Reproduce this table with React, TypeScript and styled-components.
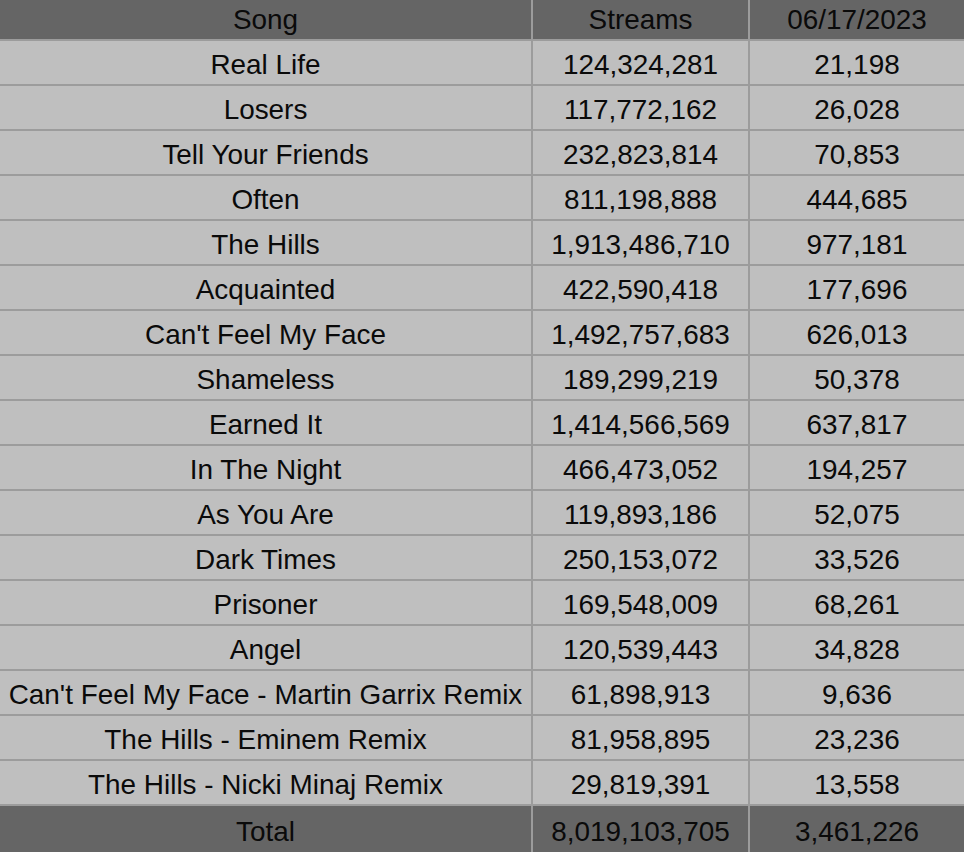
import React from "react";
import styled, { createGlobalStyle } from "styled-components";

const rows: [string, string, string][] = [
  ["Real Life", "124,324,281", "21,198"],
  ["Losers", "117,772,162", "26,028"],
  ["Tell Your Friends", "232,823,814", "70,853"],
  ["Often", "811,198,888", "444,685"],
  ["The Hills", "1,913,486,710", "977,181"],
  ["Acquainted", "422,590,418", "177,696"],
  ["Can't Feel My Face", "1,492,757,683", "626,013"],
  ["Shameless", "189,299,219", "50,378"],
  ["Earned It", "1,414,566,569", "637,817"],
  ["In The Night", "466,473,052", "194,257"],
  ["As You Are", "119,893,186", "52,075"],
  ["Dark Times", "250,153,072", "33,526"],
  ["Prisoner", "169,548,009", "68,261"],
  ["Angel", "120,539,443", "34,828"],
  ["Can't Feel My Face - Martin Garrix Remix", "61,898,913", "9,636"],
  ["The Hills - Eminem Remix", "81,958,895", "23,236"],
  ["The Hills - Nicki Minaj Remix", "29,819,391", "13,558"],
];

export default function App() {
  return (
    <>
      <GlobalStyle />
      <ScTable>
        <ScCell $dark $height={39} $shift={0}>Song</ScCell>
        <ScCell $dark $height={39} $shift={0}>Streams</ScCell>
        <ScCell $dark $height={39} $shift={0}>06/17/2023</ScCell>

        {rows.map(([song, streams, day]) => (
          <React.Fragment key={song}>
            <ScCell $height={43} $shift={4}>{song}</ScCell>
            <ScCell $height={43} $shift={4}>{streams}</ScCell>
            <ScCell $height={43} $shift={4}>{day}</ScCell>
          </React.Fragment>
        ))}

        <ScCell $dark $height={46} $shift={6}>Total</ScCell>
        <ScCell $dark $height={46} $shift={6}>8,019,103,705</ScCell>
        <ScCell $dark $height={46} $shift={6}>3,461,226</ScCell>
      </ScTable>
    </>
  );
}

const GlobalStyle = createGlobalStyle`
  body {
    margin: 0;
    background: #bfbfbf;
    overflow: hidden;
  }
`;

const ScTable = styled.div`
  display: grid;
  grid-template-columns: 531px 215px 214px;
  column-gap: 2px;
  row-gap: 2px;
  width: 964px;
  height: 852px;
  background-color: #9c9c9c;
  align-content: start;
  font-family: "Liberation Sans", Arial, sans-serif;
  font-size: 27.9px;
  color: #0a0a0a;
`;

const ScCell = styled.div<{
  $dark?: boolean;
  $height: number;
  $shift: number;
}>`
  height: ${(p) => p.$height}px;
  display: flex;
  align-items: center;
  justify-content: center;
  white-space: nowrap;
  background-color: ${(p) => (p.$dark ? "#656565" : "#bfbfbf")};
  padding-top: ${(p) => p.$shift}px;
  box-sizing: border-box;
`;
